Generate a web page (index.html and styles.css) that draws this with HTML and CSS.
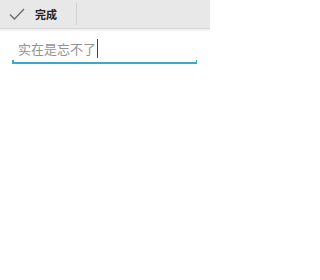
FILE: index.html
```html
<!DOCTYPE html>
<html>
<head>
<meta charset="utf-8">
<link rel="stylesheet" href="styles.css">
</head>
<body>
<div class="actionbar">
  <div class="done">
    <svg class="check" width="16" height="12" viewBox="0 0 16 12"><path d="M1 6.5 L5.5 11 L15 1" fill="none" stroke="#6a6a6a" stroke-width="1.3"/></svg>
    <span class="done-label">完成</span>
  </div>
  <div class="sep"></div>
</div>
<div class="shadow"></div>
<div class="field">
  <div class="input"><span class="text">实在是忘不了</span><span class="cursor"></span></div>
  <div class="underline"></div>
</div>
</body>
</html>
```
FILE: styles.css
```css
html, body { margin: 0; padding: 0; background: #fff; }
body { width: 210px; height: 280px; font-family: "Noto Sans CJK SC", "Noto Sans", sans-serif; }
.actionbar {
  height: 28px;
  background: #e8e8e8;
  display: flex;
  align-items: center;
  border-bottom: 1px solid #d6d6d6;
}
.done {
  display: flex;
  align-items: center;
  width: 76px;
  height: 100%;
}
.check { margin-left: 9px; margin-right: 10px; }
.done-label { font-size: 11px; font-weight: bold; color: #222; }
.sep { width: 1px; height: 22px; background: #d2d2d2; }
.shadow { height: 3px; background: linear-gradient(#ececec, #fff); }
.field { margin: 4px 13px 0 12px; }
.input { display: flex; align-items: center; height: 24px; padding-left: 6px; }
.text { font-size: 13px; color: #939393; }
.cursor { width: 1px; height: 19px; background: #444; margin-left: 1px; }
.underline {
  height: 1.5px;
  margin-top: 2px;
  background: #3ba9cc;
  position: relative;
}
.underline::before, .underline::after {
  content: ""; position: absolute; bottom: 0; width: 1.5px; height: 4px; background: #3ba9cc;
}
.underline::before { left: 0; }
.underline::after { right: 0; }
```
